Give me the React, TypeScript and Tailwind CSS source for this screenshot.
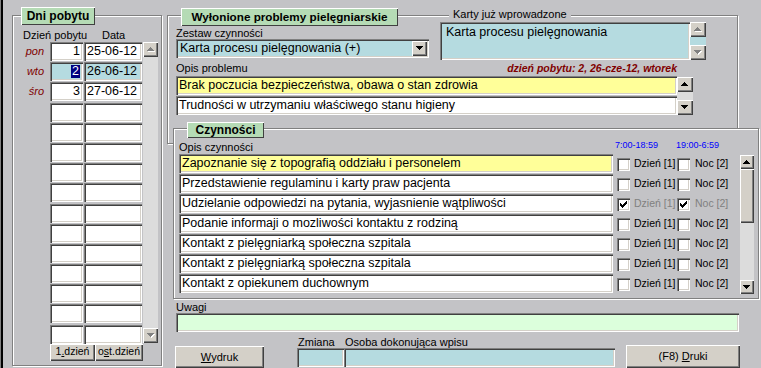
import React from "react";

const FONT = "font-['Liberation_Sans',Arial,sans-serif]";
const BG = "bg-[#c3c3c6]";
const sunken =
  "shadow-[inset_1px_1px_0_#808080,inset_2px_2px_0_#404040,inset_-1px_-1px_0_#ffffff,inset_-2px_-2px_0_#d4d0c8]";
const raised =
  "shadow-[inset_1px_1px_0_#ffffff,inset_-1px_-1px_0_#404040,inset_-2px_-2px_0_#808080]";
const etched = "border border-[#808080] shadow-[inset_1px_1px_0_#ffffff,1px_1px_0_#ffffff]";

const UP = "M3 0h1v1h-1z M2 1h3v1h-3z M1 2h5v1h-5z M0 3h7v1h-7z";
const DOWN = "M0 0h7v1h-7z M1 1h5v1h-5z M2 2h3v1h-3z M3 3h1v1h-1z";
const CHECK =
  "M6 0h1v1h-1z M5 1h2v1h-2z M0 2h1v1h-1z M4 2h3v1h-3z M0 3h2v1h-2z M3 3h3v1h-3z M0 4h5v1h-5z M1 5h3v1h-3z M2 6h1v1h-1z";

type Dir = "up" | "down";

const Tri: React.FC<{ dir: Dir; disabled?: boolean }> = ({ dir, disabled }) => (
  <svg width="8" height="5" viewBox="0 0 8 5" shapeRendering="crispEdges">
    {disabled ? (
      <>
        <path d={dir === "up" ? UP : DOWN} fill="#ffffff" transform="translate(1 1)" />
        <path d={dir === "up" ? UP : DOWN} fill="#808080" />
      </>
    ) : (
      <path d={dir === "up" ? UP : DOWN} fill="#000000" />
    )}
  </svg>
);

const ArrowBtn: React.FC<{ dir: Dir; disabled?: boolean; className?: string }> = ({
  dir,
  disabled,
  className = "",
}) => (
  <div className={`flex shrink-0 items-center justify-center bg-[#d4d0c8] ${raised} ${className}`}>
    <Tri dir={dir} disabled={disabled} />
  </div>
);

const Legend: React.FC<{ className: string; children: React.ReactNode }> = ({ className, children }) => (
  <div
    className={`absolute flex items-center justify-center whitespace-nowrap bg-[#b5dbb5] font-bold leading-none shadow-[inset_1px_1px_0_#ffffff,inset_-1px_-1px_0_#404040] ${className}`}
  >
    {children}
  </div>
);

const Checkbox: React.FC<{ checked?: boolean }> = ({ checked }) => (
  <div className={`relative mt-[4px] h-[13px] w-[13px] shrink-0 bg-white ${sunken}`}>
    {checked && (
      <svg className="absolute left-[3px] top-[3px]" width="7" height="7" viewBox="0 0 7 7" shapeRendering="crispEdges">
        <path d={CHECK} fill="#000000" />
      </svg>
    )}
  </div>
);

const Button: React.FC<{ className?: string; children: React.ReactNode }> = ({ className = "", children }) => (
  <div className={`flex shrink-0 items-center justify-center whitespace-nowrap bg-[#d4d0c8] ${raised} ${className}`}>
    {children}
  </div>
);

type Day = { label?: string; num?: string; date?: string; selected?: boolean };

const days: Day[] = [
  { label: "pon", num: "1", date: "25-06-12" },
  { label: "wto", num: "2", date: "26-06-12", selected: true },
  { label: "śro", num: "3", date: "27-06-12" },
  ...Array.from({ length: 12 }, () => ({})),
];

const DaysPanel = () => (
  <div className={`relative ml-[9px] mt-[15px] h-[351px] w-[150px] shrink-0 ${etched}`}>
    <Legend className="left-[8px] top-[-9px] h-[18px] w-[74px] text-[12px]">Dni pobytu</Legend>
    <div className="mt-[12px] flex h-[14px] text-[11px] leading-[14px]">
      <span className="w-[89px] pl-[10px]">Dzień pobytu</span>
      <span>Data</span>
    </div>
    <div className="flex">
      <div className="flex flex-col">
        {days.map((d, i) => {
          const fill = d.selected ? "bg-[#b5dbe0]" : "bg-white";
          return (
            <div key={i} className="flex h-[20.2px]">
              <div className="w-[37px] pr-[6px] text-right text-[11px] italic leading-[19px] text-[#800000]">
                {d.label}
              </div>
              <div className={`h-[19px] w-[33px] pr-[3px] text-right text-[12.5px] leading-[19px] ${fill} ${sunken}`}>
                {d.selected ? (
                  <span className="inline-block bg-[#000080] px-[1px] leading-[13px] text-white">{d.num}</span>
                ) : (
                  d.num
                )}
              </div>
              <div className={`ml-[1px] h-[19px] w-[58px] pl-[3px] text-[12.5px] leading-[19px] ${fill} ${sunken}`}>
                {d.date}
              </div>
            </div>
          );
        })}
      </div>
      <div className="ml-[1px] flex h-[301px] w-[15px] flex-col">
        <ArrowBtn dir="up" disabled className="h-[15px] w-[15px]" />
        <div className="flex-1 bg-[#dcdcdc]" />
        <ArrowBtn dir="down" disabled className="h-[15px] w-[15px]" />
      </div>
    </div>
    <div className="-mt-[1px] ml-[37px] flex text-[10.5px]">
      <Button className="h-[17px] w-[45px]">
        1<span className="underline">.</span>dzień
      </Button>
      <Button className="h-[17px] w-[48px]">
        o<span className="underline">s</span>t.dzień
      </Button>
    </div>
  </div>
);

const ProblemsFrame = () => (
  <div className={`relative ml-[5px] mt-[15px] h-[129px] w-[571px] ${etched}`}>
    <Legend className="left-[13px] top-[-8px] h-[18px] w-[217px] text-[11.7px]">
      Wyłonione problemy pielęgniarskie
    </Legend>
    <span className={`absolute left-[281px] top-[-8px] whitespace-nowrap px-[4px] text-[11px] leading-[13px] ${BG}`}>
      Karty już wprowadzone
    </span>
    <div className="flex pl-[8px]">
      <div className="w-[253px] pt-[11px]">
        <div className="text-[11px] leading-[12px]">Zestaw czynności</div>
        <div className={`flex h-[19px] items-center justify-between bg-[#b5dbe0] pl-[4px] pr-[2px] text-[12.5px] ${sunken}`}>
          <span>Karta procesu pielęgnowania (+)</span>
          <ArrowBtn dir="down" className="h-[15px] w-[15px]" />
        </div>
      </div>
      <div className="ml-[11px] flex pt-[6px]">
        <div className={`h-[38px] w-[250px] bg-[#b5dbe0] pl-[6px] pt-[2px] text-[12.5px] leading-[16px] ${sunken}`}>
          Karta procesu pielęgnowania
        </div>
        <div className="flex h-[38px] w-[16px] flex-col">
          <ArrowBtn dir="up" disabled className="h-[15px] w-[16px]" />
          <div className="flex-1 bg-[#b5dbe0]" />
          <ArrowBtn dir="down" disabled className="h-[15px] w-[16px]" />
        </div>
      </div>
    </div>
    <div className="ml-[8px] flex h-[16px] w-[517px] items-end justify-between pb-[1px]">
      <span className="text-[11px] leading-[13px]">Opis problemu</span>
      <span className="whitespace-nowrap pr-[16px] text-[10.5px] font-bold italic leading-[13px] text-[#800000]">
        dzień pobytu: 2, 26-cze-12, wtorek
      </span>
    </div>
    <div className="ml-[8px] flex">
      <div className="flex w-[501px] flex-col text-[12.5px] leading-[19px]">
        <div className={`h-[19px] bg-[#ffff99] pl-[3px] ${sunken}`}>Brak poczucia bezpieczeństwa, obawa o stan zdrowia</div>
        <div className={`mt-[1px] h-[19px] bg-white pl-[3px] ${sunken}`}>Trudności w utrzymaniu właściwego stanu higieny</div>
      </div>
      <div className="mt-[1px] flex h-[38px] w-[16px] flex-col">
        <ArrowBtn dir="up" className="h-[15px] w-[16px]" />
        <div className="flex-1 bg-[#dcdcdc]" />
        <ArrowBtn dir="down" className="h-[15px] w-[16px]" />
      </div>
    </div>
  </div>
);

type Activity = { text: string; yellow?: boolean; checked?: boolean };

const activities: Activity[] = [
  { text: "Zapoznanie się z topografią oddziału i personelem", yellow: true },
  { text: "Przedstawienie regulaminu i karty praw pacjenta" },
  { text: "Udzielanie odpowiedzi na pytania, wyjasnienie wątpliwości", checked: true },
  { text: "Podanie informaji o mozliwości kontaktu z rodziną" },
  { text: "Kontakt z pielęgniarką społeczna szpitala" },
  { text: "Kontakt z pielęgniarką społeczna szpitala" },
  { text: "Kontakt z opiekunem duchownym" },
];

const ActivitiesFrame = () => (
  <div className={`relative z-10 -mt-[16px] ml-[11px] h-[171px] w-[586px] ${BG} ${etched}`}>
    <Legend className="left-[13px] top-[-7px] h-[16px] w-[77px] text-[12px]">Czynności</Legend>
    <div className="flex pl-[5px]">
      <div className="w-[561px]">
        <div className="flex h-[25px]">
          <span className="w-[436px] pt-[12px] text-[11px] leading-[12px]">Opis czynności</span>
          <span className="w-[61px] pt-[11px] text-[9px] leading-[10px] text-[#0000ff]">7:00-18:59</span>
          <span className="pt-[11px] text-[9px] leading-[10px] text-[#0000ff]">19:00-6:59</span>
        </div>
        {activities.map((a, i) => (
          <div key={i} className="flex h-[20px]">
            <div
              className={`h-[19px] w-[434px] shrink-0 pl-[3px] text-[12.5px] leading-[19px] ${a.yellow ? "bg-[#ffff99]" : "bg-white"} ${sunken}`}
            >
              {a.text}
            </div>
            <div
              className={`ml-[4px] flex whitespace-nowrap text-[10.5px] leading-[19px] ${a.checked ? "text-[#808080]" : ""}`}
            >
              <div className="flex w-[60px] shrink-0">
                <Checkbox checked={a.checked} />
                <span className="ml-[4px]">Dzień [1]</span>
              </div>
              <Checkbox checked={a.checked} />
              <span className="ml-[5px]">Noc [2]</span>
            </div>
          </div>
        ))}
      </div>
      <div className="mt-[26px] flex h-[139px] w-[14px] flex-col">
        <ArrowBtn dir="up" className="h-[14px] w-[14px]" />
        <div className={`h-[54px] bg-[#d4d0c8] ${raised}`} />
        <div className="flex-1 bg-[#dcdcdc]" />
        <ArrowBtn dir="down" className="h-[14px] w-[14px]" />
      </div>
    </div>
  </div>
);

const Footer = () => (
  <div>
    <div className="ml-[14px] h-[14px] pt-[3px] text-[11px] leading-[11px]">Uwagi</div>
    <div className={`ml-[14px] h-[19px] w-[563px] bg-[#dcffdc] ${sunken}`} />
    <div className="flex h-[36px]">
      <Button className="ml-[13px] mt-[14px] h-[22px] w-[89px] text-[11px]">
        <span className="underline">W</span>ydruk
      </Button>
      <div className="ml-[33px] w-[47px]">
        <div className="h-[16px] pl-[1px] pt-[5px] text-[11px] leading-[11px]">Zmiana</div>
        <div className={`h-[19px] bg-[#b5dbe0] ${sunken}`} />
      </div>
      <div className="w-[271px]">
        <div className="h-[16px] whitespace-nowrap pl-[1px] pt-[5px] text-[11px] leading-[11px]">Osoba dokonująca wpisu</div>
        <div className={`h-[19px] bg-[#b5dbe0] ${sunken}`} />
      </div>
      <Button className="ml-[11px] mt-[13px] h-[23px] w-[114px] text-[11px]">
        (F8)&nbsp;<span className="underline">D</span>ruki
      </Button>
    </div>
  </div>
);

export default function App() {
  return (
    <div className={`flex h-[368px] w-[761px] overflow-hidden text-black ${BG} ${FONT}`}>
      <div className="h-full w-[3px] shrink-0 border-l border-[#808080] bg-black" />
      <DaysPanel />
      <div className="flex shrink-0 flex-col">
        <ProblemsFrame />
        <ActivitiesFrame />
        <Footer />
      </div>
    </div>
  );
}
